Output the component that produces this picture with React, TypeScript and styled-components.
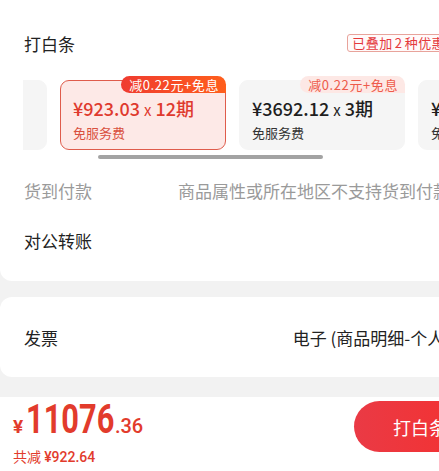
import { createGlobalStyle } from 'styled-components'
import styled from 'styled-components'

const GlobalStyle = createGlobalStyle`
  html, body {
    margin: 0;
    padding: 0;
    background: #f2f2f2;
    overflow: hidden;
  }
  body {
    font-family: "Noto Sans CJK SC", "Noto Sans", sans-serif;
    color: #222;
  }
`

const plans = [
  { price: '¥1846.06', term: '6期', tag: '', selected: false },
  { price: '¥923.03', term: '12期', tag: '减0.22元+免息', selected: true },
  { price: '¥3692.12', term: '3期', tag: '减0.22元+免息', selected: false },
  { price: '¥1846.06', term: '6期', tag: '减0.22元+免息', selected: false },
]

const App = () => {
  return (
    <>
      <GlobalStyle />
      <Page>
        <Card className="pay_card" $top>
          <Header>
            <Label>打白条</Label>
            <Badge>已叠加 2 种优惠</Badge>
          </Header>
          <PlanViewport>
            <PlanTrack>
              {plans.map((p, i) => (
                <Plan key={i} $selected={p.selected}>
                  {p.tag && <Tag $selected={p.selected}>{p.tag}</Tag>}
                  <Price $selected={p.selected}>
                    {p.price} <Times>x</Times> {p.term}
                  </Price>
                  <Fee $selected={p.selected}>免服务费</Fee>
                </Plan>
              ))}
            </PlanTrack>
          </PlanViewport>
          <ScrollBar />
          <Row>
            <Label $muted>货到付款</Label>
            <Value $muted>商品属性或所在地区不支持货到付款</Value>
          </Row>
          <Row>
            <Label>对公转账</Label>
          </Row>
        </Card>
        <Card className="invoice_card">
          <Row $tall>
            <Label>发票</Label>
            <Value>电子 (商品明细-个人)</Value>
          </Row>
        </Card>
        <BottomBar>
          <Total>
            <Amount>
              <Yen>¥</Yen>
              <Big>11076</Big>
              <Cents>.36</Cents>
            </Amount>
            <Saved>
              共减 <b>¥922.64</b>
            </Saved>
          </Total>
          <PayButton>打白条</PayButton>
        </BottomBar>
      </Page>
    </>
  )
}

export default App

const Page = styled.div`
  width: 498px;
  min-height: 471px;
  display: flex;
  flex-direction: column;
`

const Card = styled.section<{ $top?: boolean }>`
  background: #fff;
  border-radius: ${p => (p.$top ? '0 0 12px 12px' : '12px')};
  padding: ${p => (p.$top ? '28px 0 16px' : '0')};
  margin-bottom: ${p => (p.$top ? '16px' : '20px')};
`

const Header = styled.div`
  height: 30px;
  display: flex;
  align-items: center;
  justify-content: space-between;
  padding: 0 48px 0 24px;
`

const Label = styled.span<{ $muted?: boolean }>`
  font-size: 17px;
  color: ${p => (p.$muted ? '#9a9a9a' : '#222')};
  white-space: nowrap;
`

const Badge = styled.span`
  font-size: 13px;
  line-height: 16px;
  letter-spacing: 0.4px;
  word-spacing: -1px;
  color: #e4393c;
  border: 1px solid #e8a39b;
  border-radius: 3px;
  padding: 0 4px;
  background: #fffafa;
  white-space: nowrap;
`

const PlanViewport = styled.div`
  margin: 14px 0 0 23px;
  padding-top: 8px;
  overflow: hidden;
`

const PlanTrack = styled.div`
  display: flex;
  gap: 13px;
  margin-left: -142px;
`

const Plan = styled.div<{ $selected?: boolean }>`
  position: relative;
  flex: 0 0 166px;
  height: 70px;
  box-sizing: border-box;
  border-radius: 9px;
  padding: 17px 0 0 12px;
  background: ${p => (p.$selected ? '#fde9e7' : '#f5f5f5')};
  border: 1px solid ${p => (p.$selected ? '#df5c4c' : '#f5f5f5')};
`

const Tag = styled.span<{ $selected?: boolean }>`
  position: absolute;
  top: -5px;
  right: -1px;
  height: 17px;
  line-height: 17px;
  padding: 0 7px 0 8px;
  font-size: 13px;
  letter-spacing: 0.6px;
  white-space: nowrap;
  border-radius: 9px 9px 0 9px;
  color: ${p => (p.$selected ? '#fff' : '#ee5b4b')};
  background: ${p => (p.$selected ? 'linear-gradient(90deg, #ef3b30, #ff5f1c)' : '#fde8e5')};
`

const Price = styled.div<{ $selected?: boolean }>`
  font-size: 18px;
  line-height: 20px;
  font-weight: 500;
  white-space: nowrap;
  color: ${p => (p.$selected ? '#df3a2e' : '#1e1e1e')};
`

const Times = styled.span`
  font-size: 15px;
  font-weight: 400;
`

const Fee = styled.div<{ $selected?: boolean }>`
  margin-top: 4px;
  font-size: 13px;
  line-height: 18px;
  white-space: nowrap;
  color: ${p => (p.$selected ? '#d9513f' : '#333')};
`

const ScrollBar = styled.div`
  width: 225px;
  height: 4px;
  border-radius: 2px;
  background: #a3a3a3;
  margin: 5px 0 0 98px;
`

const Row = styled.div<{ $tall?: boolean }>`
  height: ${p => (p.$tall ? '80px' : '50px')};
  display: flex;
  align-items: center;
  justify-content: space-between;
  padding: 0 48px 0 24px;
  margin-top: ${p => (p.$tall ? '0' : '6px')};
  & + & {
    margin-top: 0;
  }
`

const Value = styled.span<{ $muted?: boolean }>`
  font-size: 17px;
  white-space: nowrap;
  color: ${p => (p.$muted ? '#9a9a9a' : '#222')};
`

const BottomBar = styled.footer`
  flex: 1;
  background: #fff;
  display: flex;
  align-items: flex-start;
  justify-content: space-between;
  padding: 4px 12px 0 13px;
`

const Total = styled.div`
  display: flex;
  flex-direction: column;
  color: #e23b2c;
`

const Amount = styled.div`
  display: flex;
  align-items: baseline;
  line-height: 38px;
  font-family: Roboto, "Noto Sans", sans-serif;
  font-weight: 700;
`

const Yen = styled.span`
  font-size: 19px;
  margin-right: 3px;
`

const Big = styled.span`
  display: inline-block;
  font-size: 40px;
  transform: scaleX(0.77);
  transform-origin: left center;
  margin-right: -26px;
`

const Cents = styled.span`
  font-size: 20px;
  font-weight: 500;
`

const Saved = styled.div`
  font-size: 14px;
  line-height: 18px;
  margin-top: 1px;
  b {
    font-family: Roboto, "Noto Sans", sans-serif;
    font-weight: 500;
  }
`

const PayButton = styled.button`
  width: 132px;
  height: 51px;
  border: none;
  border-radius: 26px;
  background: linear-gradient(90deg, #ea3a45, #f5302e);
  color: #fff;
  font-family: "Noto Sans CJK SC", sans-serif;
  font-size: 18px;
`
